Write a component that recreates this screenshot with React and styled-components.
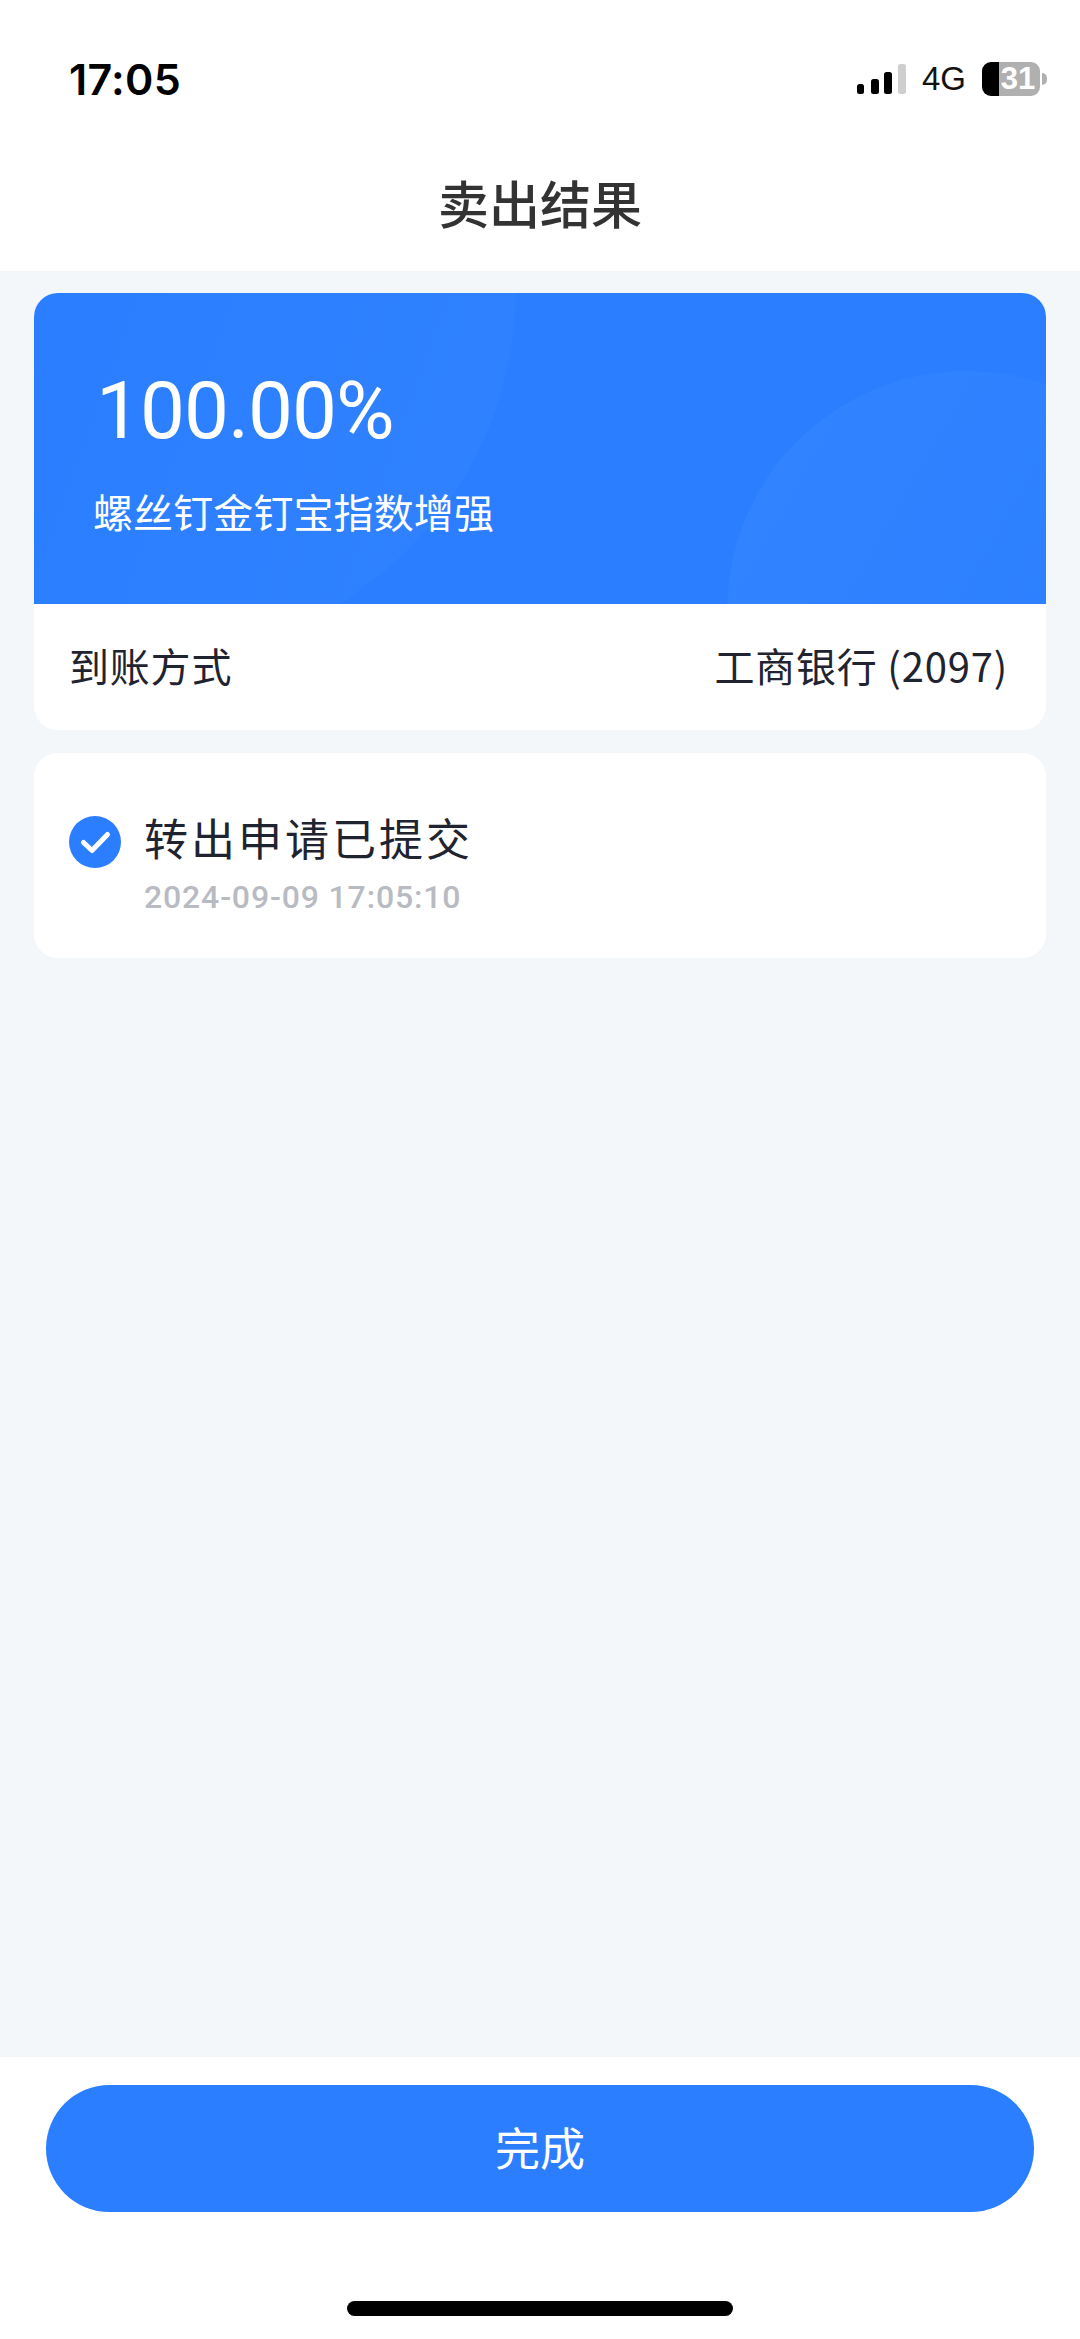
import React from 'react';
import styled, { createGlobalStyle } from 'styled-components';

const CJK = '"Noto Sans CJK SC", "Noto Sans", sans-serif';

const GlobalStyle = createGlobalStyle`
  html, body {
    margin: 0;
    padding: 0;
    background: #f4f7fa;
  }
  * {
    box-sizing: border-box;
  }
`;

const Page = styled.div`
  width: 1080px;
  height: 2339px;
  display: flex;
  flex-direction: column;
  background: #f4f7fa;
  font-family: ${CJK};
  overflow: hidden;
`;

const TopBar = styled.header`
  height: 271px;
  flex-shrink: 0;
  background: #fff;
  display: flex;
  flex-direction: column;
`;

const StatusBar = styled.div`
  height: 156px;
  padding: 52px 40px 0 69px;
  display: flex;
  justify-content: space-between;
  align-items: flex-start;
`;

const Time = styled.span`
  font-family: Inter, "Liberation Sans", sans-serif;
  font-size: 43px;
  line-height: 54px;
  font-weight: 600;
  letter-spacing: 0.3px;
  color: #000;
`;

const StatusRight = styled.div`
  display: flex;
  align-items: center;
  height: 36px;
  margin-top: 9px;
`;

const Network = styled.span`
  font-family: "Liberation Sans", sans-serif;
  font-size: 33px;
  line-height: 36px;
  color: #111;
  margin: 0 16px 0 16px;
`;

const Battery = styled.span`
  position: relative;
  width: 58px;
  height: 34px;
  border-radius: 9px;
  background: linear-gradient(90deg, #000 0 29%, #b0b0b0 29% 100%);
  color: #fff;
  font-family: "Liberation Sans", sans-serif;
  font-size: 31px;
  font-weight: 700;
  line-height: 34px;
  text-align: center;
  padding-left: 14px;

  &::after {
    content: '';
    position: absolute;
    right: -7px;
    top: 11px;
    width: 5px;
    height: 12px;
    border-radius: 0 6px 6px 0;
    background: #b0b0b0;
  }
`;

const Title = styled.h1`
  margin: 0;
  height: 115px;
  padding-top: 10px;
  text-align: center;
  font-size: 51px;
  line-height: 72px;
  font-weight: 500;
  color: #333;
`;

const Content = styled.main`
  flex: 1;
  padding: 22px 34px 0 34px;
  display: flex;
  flex-direction: column;
  gap: 23px;
`;

const Card = styled.section`
  background: #fff;
  border-radius: 24px;
  overflow: hidden;
`;

const Hero = styled.div`
  position: relative;
  height: 311px;
  padding: 74px 0 0 59px;
  background: #2a7eff;
  color: #fff;
  overflow: hidden;

  /* two faint circles behind the text */
  &::before {
    content: '';
    position: absolute;
    left: -258px;
    top: -375px;
    width: 740px;
    height: 740px;
    border-radius: 50%;
    background: linear-gradient(110deg, rgba(255, 255, 255, 0) 35%, rgba(255, 255, 255, 0.03) 100%);
  }

  &::after {
    content: '';
    position: absolute;
    left: 693px;
    top: 78px;
    width: 480px;
    height: 480px;
    border-radius: 50%;
    background: linear-gradient(120deg, rgba(255, 255, 255, 0.04) 10%, rgba(255, 255, 255, 0.01) 70%);
  }
`;

const Percent = styled.div`
  position: relative;
  z-index: 1;
  margin-left: 3px;
  font-family: Roboto, sans-serif;
  font-size: 80px;
  line-height: 88px;
  font-weight: 450;
  letter-spacing: -1px;
`;

const FundName = styled.div`
  position: relative;
  z-index: 1;
  margin-top: 28px;
  font-size: 40px;
  line-height: 56px;
  font-weight: 400;
  letter-spacing: 0.1px;
`;

const InfoRow = styled.div`
  height: 126px;
  padding: 0 38px 4px 35px;
  display: flex;
  justify-content: space-between;
  align-items: center;
  font-size: 40px;
  line-height: 56px;
  letter-spacing: 0.8px;
  color: #1f2430;
`;

const StepCard = styled(Card)`
  height: 205px;
  padding: 56px 35px 0 35px;
  display: flex;
  gap: 23px;
  align-items: flex-start;
`;

const StepIcon = styled.svg`
  width: 52px;
  height: 52px;
  flex-shrink: 0;
  margin-top: 7px;
`;

const StepBody = styled.div`
  display: flex;
  flex-direction: column;
`;

const StepTitle = styled.div`
  font-size: 44px;
  line-height: 56px;
  letter-spacing: 3px;
  color: #1f2430;
`;

const StepTime = styled.div`
  margin-top: 12px;
  font-family: Roboto, sans-serif;
  font-size: 32px;
  line-height: 40px;
  letter-spacing: 0.85px;
  font-weight: 500;
  color: #b8bbc2;
`;

const Footer = styled.footer`
  height: 282px;
  flex-shrink: 0;
  background: #fff;
  padding: 28px 46px 0 46px;
  display: flex;
  flex-direction: column;
  align-items: center;
`;

const DoneButton = styled.button`
  width: 100%;
  height: 127px;
  border: none;
  border-radius: 64px;
  padding: 0 0 5px 0;
  background: #2a7eff;
  color: #fff;
  font-family: ${CJK};
  font-size: 45px;
  font-weight: 400;
`;

const HomeIndicator = styled.div`
  width: 386px;
  height: 15px;
  margin-top: 89px;
  border-radius: 8px;
  background: #000;
`;

const SignalIcon = () => (
  <svg width="49" height="30" viewBox="0 0 49 30">
    <rect x="0" y="20" width="7" height="10" rx="2.5" fill="#000" />
    <rect x="14" y="15" width="8" height="15" rx="2.5" fill="#000" />
    <rect x="27" y="8" width="8" height="22" rx="2.5" fill="#000" />
    <rect x="41" y="0" width="8" height="30" rx="2.5" fill="#cfcfcf" />
  </svg>
);

export default function App() {
  return (
    <Page>
      <GlobalStyle />
      <TopBar>
        <StatusBar>
          <Time>17:05</Time>
          <StatusRight>
            <SignalIcon />
            <Network>4G</Network>
            <Battery>31</Battery>
          </StatusRight>
        </StatusBar>
        <Title>卖出结果</Title>
      </TopBar>

      <Content>
        <Card>
          <Hero>
            <Percent>100.00%</Percent>
            <FundName>螺丝钉金钉宝指数增强</FundName>
          </Hero>
          <InfoRow>
            <span>到账方式</span>
            <span>工商银行 (2097)</span>
          </InfoRow>
        </Card>

        <StepCard>
          <StepIcon viewBox="0 0 52 52">
            <circle cx="26" cy="26" r="26" fill="#2a7eff" />
            <path d="M14.5 26.5L23 34.5L38.5 18.5" fill="none" stroke="#fff" strokeWidth="5" strokeLinecap="round" strokeLinejoin="round" />
          </StepIcon>
          <StepBody>
            <StepTitle>转出申请已提交</StepTitle>
            <StepTime>2024-09-09 17:05:10</StepTime>
          </StepBody>
        </StepCard>
      </Content>

      <Footer>
        <DoneButton>完成</DoneButton>
        <HomeIndicator />
      </Footer>
    </Page>
  );
}
